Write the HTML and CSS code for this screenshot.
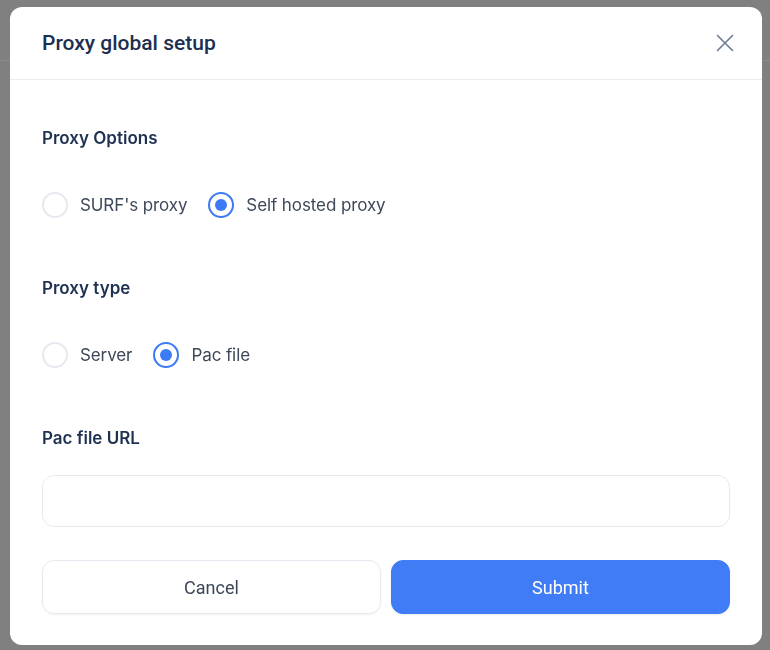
FILE: index.html
```html
<!DOCTYPE html>
<html>
<head>
    <title>Proxy global setup</title>
    <link rel="stylesheet" href="styles.css">
</head>
<body>
    <div class="topbar"></div>

    <div class="backdrop">
        <div class="modal">
            <div class="modal-header">
                <h2 class="modal-title">Proxy global setup</h2>
                <button class="close-btn" aria-label="Close">
                    <svg width="18" height="18" viewBox="0 0 18 18">
                        <path d="M1.5 1.5 L16.5 16.5 M16.5 1.5 L1.5 16.5" stroke="#6b7b93" stroke-width="1.6" stroke-linecap="round" fill="none"/>
                    </svg>
                </button>
            </div>

            <form class="modal-body">
                <div class="field-label">Proxy Options</div>
                <div class="radio-row">
                    <label class="radio">
                        <input type="radio" name="provider" value="surf">
                        <span class="radio-mark"></span>
                        <span>SURF's proxy</span>
                    </label>
                    <label class="radio">
                        <input type="radio" name="provider" value="self" checked>
                        <span class="radio-mark"></span>
                        <span>Self hosted proxy</span>
                    </label>
                </div>

                <div class="field-label">Proxy type</div>
                <div class="radio-row">
                    <label class="radio">
                        <input type="radio" name="type" value="server">
                        <span class="radio-mark"></span>
                        <span>Server</span>
                    </label>
                    <label class="radio">
                        <input type="radio" name="type" value="pac" checked>
                        <span class="radio-mark"></span>
                        <span>Pac file</span>
                    </label>
                </div>

                <div class="field-label url-label">Pac file URL</div>
                <input class="text-input" type="text">

                <div class="actions">
                    <button type="button" class="btn btn-secondary">Cancel</button>
                    <button type="submit" class="btn btn-primary">Submit</button>
                </div>
            </form>
        </div>
    </div>
</body>
</html>
```

FILE: styles.css
```css
html, body {
    margin: 0;
    height: 100%;
}

body {
    background-color: #808080;
    font-family: Inter, "Noto Sans", sans-serif;
}

/* page header behind the overlay */
.topbar {
    height: 60px;
    border-bottom: 1px solid #8c8c8c;
}

.backdrop {
    position: fixed;
    inset: 0;
    padding: 7px 8px 5px 10px;
}

.modal {
    background: #fff;
    border-radius: 12px;
    height: 638px;
    display: flex;
    flex-direction: column;
}

.modal-header {
    height: 72px;
    padding: 0 28px 0 32px;
    display: flex;
    align-items: center;
    justify-content: space-between;
    border-bottom: 1px solid #e8ebf0;
}

.modal-title {
    margin: 0;
    font-family: Roboto, sans-serif;
    font-size: 21px;
    font-weight: 500;
    color: #1c2f50;
}

.close-btn {
    border: none;
    background: none;
    padding: 0;
    width: 18px;
    height: 18px;
    cursor: pointer;
}

.modal-body {
    padding: 46px 32px 31px;
    display: flex;
    flex-direction: column;
}

.field-label {
    font-size: 17px;
    line-height: 24px;
    font-weight: 600;
    color: #1e3152;
}

.radio-row {
    display: flex;
    gap: 21px;
    margin: 42px 0 58px;
}

.radio {
    display: flex;
    align-items: center;
    gap: 12px;
    font-size: 17px;
    line-height: 26px;
    letter-spacing: -0.1px;
    color: #3d4859;
    cursor: pointer;
}

.radio input {
    display: none;
}

.radio-mark {
    width: 26px;
    height: 26px;
    box-sizing: border-box;
    border: 2px solid #e6e9ef;
    border-radius: 50%;
    display: flex;
    align-items: center;
    justify-content: center;
}

.radio input:checked + .radio-mark {
    border-color: #3d7bf5;
}

.radio input:checked + .radio-mark::after {
    content: "";
    width: 12px;
    height: 12px;
    border-radius: 50%;
    background: #3d7bf5;
}

.url-label {
    margin-bottom: 25px;
}

.text-input {
    height: 52px;
    box-sizing: border-box;
    border: 1px solid #e6e9ef;
    border-radius: 12px;
    padding: 0 16px;
    font-size: 16px;
    outline: none;
}

.actions {
    display: flex;
    gap: 10px;
    margin-top: 33px;
}

.btn {
    flex: 1;
    height: 54px;
    border-radius: 12px;
    font-family: Roboto, sans-serif;
    font-size: 18px;
    cursor: pointer;
}

.btn-secondary {
    background: #fff;
    border: 1px solid #e6e9ef;
    color: #3b4656;
    box-shadow: 0 1px 2px rgba(0, 0, 0, 0.05);
}

.btn-primary {
    background: #3f7cf6;
    border: 1px solid #3f7cf6;
    color: #fff;
    box-shadow: 0 1px 2px rgba(0, 0, 0, 0.08);
}
```
